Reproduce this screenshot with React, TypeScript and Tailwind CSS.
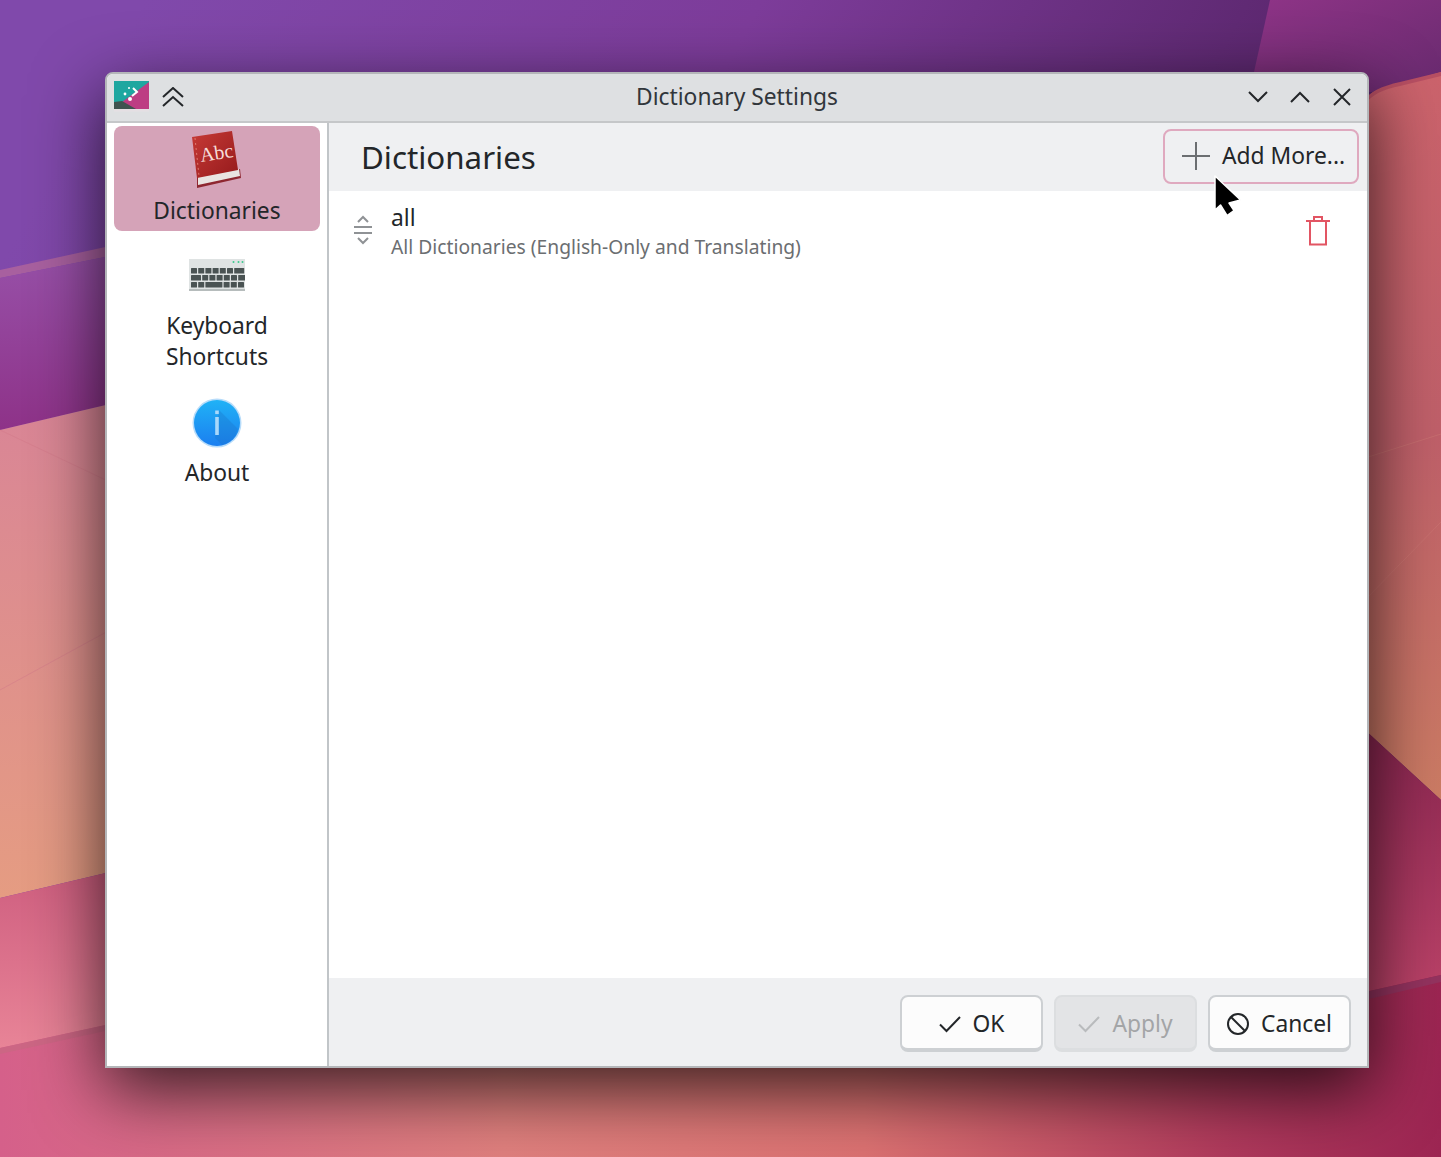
import React from "react";

function Wallpaper() {
  return (
    <svg className="absolute inset-0" width="1441" height="1157" viewBox="0 0 1441 1157">
      <defs>
        <linearGradient id="gTop" x1="0.1" y1="0" x2="0.9" y2="0.35">
          <stop offset="0" stopColor="#8049ab" />
          <stop offset="0.45" stopColor="#7d3c9a" />
          <stop offset="1" stopColor="#50205f" />
        </linearGradient>
        <linearGradient id="gTR" x1="0" y1="0" x2="1" y2="1">
          <stop offset="0" stopColor="#8f3487" />
          <stop offset="1" stopColor="#672a6e" />
        </linearGradient>
        <linearGradient id="gPurple" x1="0" y1="0" x2="0" y2="1">
          <stop offset="0" stopColor="#9750a8" />
          <stop offset="1" stopColor="#8e3288" />
        </linearGradient>
        <linearGradient id="gPeach" x1="0" y1="0" x2="0" y2="1">
          <stop offset="0" stopColor="#d98596" />
          <stop offset="1" stopColor="#e59c82" />
        </linearGradient>
        <linearGradient id="gPink" x1="0" y1="0" x2="0" y2="1">
          <stop offset="0" stopColor="#cf5f80" />
          <stop offset="1" stopColor="#e88497" />
        </linearGradient>
        <linearGradient id="gBottom" x1="0" y1="0" x2="1" y2="0">
          <stop offset="0" stopColor="#d5608a" />
          <stop offset="0.35" stopColor="#e0807e" />
          <stop offset="0.6" stopColor="#dc7272" />
          <stop offset="0.85" stopColor="#b03a5c" />
          <stop offset="1" stopColor="#9c2552" />
        </linearGradient>
        <linearGradient id="gCoral" x1="0" y1="0" x2="0" y2="1">
          <stop offset="0" stopColor="#cc636c" />
          <stop offset="0.5" stopColor="#c0606a" />
          <stop offset="1" stopColor="#cc7c64" />
        </linearGradient>
        <linearGradient id="gMag" x1="0" y1="0" x2="0" y2="1">
          <stop offset="0" stopColor="#8a2650" />
          <stop offset="1" stopColor="#bb4268" />
        </linearGradient>
      </defs>
      <rect width="1441" height="1157" fill="url(#gTop)" />
      <polygon points="1270,0 1441,0 1441,72 1372,92 1250,90" fill="url(#gTR)" />
      <polygon points="0,1000 1441,900 1441,1157 0,1157" fill="url(#gBottom)" />
      <polygon points="0,270 110,246 110,256 0,278" fill="#a8609f" />
      <polygon points="0,278 110,256 110,404 0,430" fill="url(#gPurple)" />
      <polygon points="0,430 110,404 110,872 0,898" fill="url(#gPeach)" />
      <line x1="0" y1="430" x2="110" y2="482" stroke="#d47a8a" strokeWidth="1" strokeOpacity="0.5" />
      <line x1="0" y1="690" x2="110" y2="630" stroke="#d47a8a" strokeWidth="1" strokeOpacity="0.5" />
      <polygon points="0,898 110,872 110,1024 0,1048" fill="url(#gPink)" />
      <polygon points="0,1048 110,1024 110,1030 0,1054" fill="#cc6684" />
      <path d="M1365,100 Q1372,88 1400,84 L1441,72 L1441,800 L1365,730 Z" fill="url(#gCoral)" />
      <path d="M1365,100 Q1372,88 1400,82 L1441,72 L1441,76 L1400,86 Q1376,90 1365,104 Z" fill="#b84f63" />
      <line x1="1365" y1="458" x2="1441" y2="434" stroke="#cf7a76" strokeWidth="1" strokeOpacity="0.5" />
      <line x1="1365" y1="600" x2="1441" y2="522" stroke="#cf7a76" strokeWidth="1" strokeOpacity="0.5" />
      <polygon points="1365,730 1441,800 1441,975 1365,992" fill="url(#gMag)" />
      <polygon points="1365,992 1441,975 1441,982 1365,1000" fill="#94335f" />
    </svg>
  );
}

function AppIcon() {
  return (
    <svg width="36" height="31" viewBox="0 0 36 31">
      <rect width="35" height="28" fill="#bd3d83" />
      <polygon points="0,0 35,0 35,1 0,27" fill="#1ea7a0" />
      <polygon points="0,28 0,21 8,20 22,28" fill="#3f5350" />
      <path d="M19 7 L23 11 L18 15" stroke="#fff" strokeWidth="2" fill="none" />
      <circle cx="16" cy="18" r="2" fill="#fff" />
      <circle cx="11" cy="13" r="1.4" fill="#fff" />
      <circle cx="15" cy="7" r="1" fill="#fff" />
      <rect y="28" width="35" height="2.5" fill="#e5dfe3" />
    </svg>
  );
}

function Book() {
  return (
    <svg width="52" height="58" viewBox="0 0 52 58">
      <defs>
        <linearGradient id="bk" x1="0" y1="0" x2="1" y2="1">
          <stop offset="0" stopColor="#c73a36" />
          <stop offset="1" stopColor="#951a1c" />
        </linearGradient>
      </defs>
      <polygon points="6,57 50,47 49,38 6,46" fill="#8e2730" />
      <polygon points="7,54 49,45 48,38 7,46" fill="#e9e4e1" />
      <polygon points="1,6 41,0 47,39 6,47" fill="url(#bk)" />
      <line x1="4" y1="7" x2="8" y2="45" stroke="#e07a70" strokeWidth="1" strokeDasharray="2 3" />
      <text x="10" y="31" transform="rotate(-9 10 31)" fontFamily="'Liberation Serif', serif" fontSize="20" fill="#f6dcd8">Abc</text>
    </svg>
  );
}

function Keyboard() {
  const rows: number[][] = [
    [6, 6, 6, 6, 6, 6, 10],
    [10, 6, 6, 6, 6, 6, 8],
    [6, 6, 17, 6, 6, 6],
  ];
  return (
    <svg width="56" height="32" viewBox="0 0 56 32">
      <rect width="56" height="32" fill="#dfe3e3" />
      <rect y="30" width="56" height="2" fill="#b6bcbc" />
      <circle cx="44.5" cy="3" r="1" fill="#3cc98f" />
      <circle cx="49.5" cy="3" r="1" fill="#3cc98f" />
      <circle cx="53.5" cy="3" r="1" fill="#3cc98f" />
      {rows.map((r, i) => {
        let x = 2;
        return r.map((w, j) => {
          const el = <rect key={`${i}-${j}`} x={x} y={9 + i * 7} width={w} height={5.5} rx={0.5} fill="#4a5353" />;
          x += w + 1.2;
          return el;
        });
      })}
    </svg>
  );
}

function Info() {
  return (
    <svg width="50" height="50" viewBox="0 0 50 50">
      <defs>
        <linearGradient id="inf" x1="0" y1="0" x2="0" y2="1">
          <stop offset="0" stopColor="#20b2f6" />
          <stop offset="1" stopColor="#1b7ff0" />
        </linearGradient>
      </defs>
      <circle cx="25" cy="25" r="24.5" fill="#b7dcfa" />
      <circle cx="25" cy="25" r="23" fill="url(#inf)" />
      <path d="M27 12 L46 31 A23 23 0 0 1 30 47 L23 40 Z" fill="#1c6fc4" opacity="0.3" />
      <rect x="23.2" y="19" width="3.6" height="18" fill="#a9d8fb" />
      <rect x="23.2" y="12.5" width="3.6" height="3.6" fill="#a9d8fb" />
    </svg>
  );
}

function Trash() {
  return (
    <svg width="24" height="30" viewBox="0 0 24 30" fill="none" stroke="#e25563" strokeWidth="2">
      <path d="M0 5H24" />
      <path d="M8 5V1H16V5" />
      <path d="M4 5V28.5H20V5" />
    </svg>
  );
}

function Check({ color }: { color: string }) {
  return (
    <svg width="22" height="18" viewBox="0 0 22 18" fill="none" stroke={color} strokeWidth="2">
      <path d="M1 9.5L7.5 16L21 2" />
    </svg>
  );
}

function SideItem({ icon, label, className }: { icon: React.ReactNode; label: React.ReactNode; className: string }) {
  return (
    <div className={`flex flex-col items-center text-center text-[22.8px] leading-[31px] text-[#232629] ${className}`}>
      {icon}
      {label}
    </div>
  );
}

function DialogButton({ icon, label, disabled }: { icon: React.ReactNode; label: string; disabled?: boolean }) {
  return (
    <div
      className={`flex h-[57px] w-[143px] items-center justify-center gap-3 rounded-lg border-2 border-b-[4px] pt-[2px] text-[22.8px] ${
        disabled ? "border-[#dcdee0] bg-[#e3e4e6] text-[#a3a5a7]" : "border-[#cdd0d3] bg-[#fcfcfc] text-[#232629]"
      }`}
    >
      {icon}
      <span className="mt-[1px]">{label}</span>
    </div>
  );
}

export default function App() {
  return (
    <div className="relative h-[1157px] w-[1441px] overflow-hidden font-['Noto_Sans',sans-serif]">
      <Wallpaper />
      <div className="absolute left-[105px] top-[72px] flex h-[996px] w-[1264px] flex-col rounded-t-lg border-2 border-[#b4b6b9] bg-white shadow-[0_22px_70px_rgba(0,0,0,0.75)]">
        <div className="relative flex h-[49px] shrink-0 items-center justify-between rounded-t-md border-b-2 border-[#c5c7c9] bg-[#dee0e2] pb-[2px] pl-[7px] pr-[15px]">
          <div className="flex items-center gap-[12px]">
            <AppIcon />
            <svg width="22" height="20" viewBox="0 0 22 20" fill="none" stroke="#232629" strokeWidth="2">
              <path d="M1 10L11 1L21 10" />
              <path d="M1 19L11 10L21 19" />
            </svg>
          </div>
          <div className="absolute inset-x-0 mt-[1px] text-center text-[22.8px] text-[#31363b]">Dictionary Settings</div>
          <div className="flex items-center gap-[22px]">
            <svg width="20" height="12" viewBox="0 0 20 12" fill="none" stroke="#232629" strokeWidth="2">
              <path d="M1 1L10 10L19 1" />
            </svg>
            <svg width="20" height="12" viewBox="0 0 20 12" fill="none" stroke="#232629" strokeWidth="2">
              <path d="M1 11L10 2L19 11" />
            </svg>
            <svg width="20" height="18" viewBox="0 0 20 18" fill="none" stroke="#232629" strokeWidth="2">
              <path d="M2 1L18 17M18 1L2 17" />
            </svg>
          </div>
        </div>
        <div className="flex min-h-0 flex-1">
          <div className="flex w-[222px] shrink-0 flex-col border-r-2 border-[#c1c5c8] px-[7px] pt-[3px]">
            <SideItem
              className="h-[105px] w-[206px] rounded-lg bg-[#d5a3b8] pt-[5px] text-[#111]"
              icon={<Book />}
              label={<div className="mt-[6px]">Dictionaries</div>}
            />
            <SideItem
              className="h-[147px] pt-[28px]"
              icon={<Keyboard />}
              label={
                <div className="mt-[19px]">
                  Keyboard
                  <br />
                  Shortcuts
                </div>
              }
            />
            <SideItem
              className="pt-[20px]"
              icon={<Info />}
              label={<div className="mt-[9px]">About</div>}
            />
          </div>
          <div className="flex min-w-0 flex-1 flex-col">
            <div className="flex h-[68px] shrink-0 items-center justify-between bg-[#eff0f2] pl-[32px] pr-[8px]">
              <div className="text-[31.3px] text-[#232629]">Dictionaries</div>
              <div className="mb-[2px] flex h-[55px] w-[196px] items-center gap-[12px] rounded-lg border-2 border-[#dfa9bf] pl-[17px] text-[22.8px] text-[#232629]">
                <svg width="28" height="28" viewBox="0 0 28 28" stroke="#6b6e71" strokeWidth="2">
                  <path d="M14 0V28M0 14H28" />
                </svg>
                <span>Add More...</span>
              </div>
            </div>
            <div className="flex flex-1 items-start justify-between bg-white pl-[24px] pr-[37px] pt-[11px]">
              <div className="flex items-center gap-[18px]">
                <svg className="mb-[2px]" width="20" height="30" viewBox="0 0 20 30" fill="none" stroke="#8f9295" strokeWidth="2">
                  <path d="M5 7L10 2L15 7" />
                  <path d="M1 12H19M1 18H19" />
                  <path d="M5 23L10 28L15 23" />
                </svg>
                <div>
                  <div className="text-[22.8px] leading-[31px] text-[#232629]">all</div>
                  <div className="text-[19.25px] leading-[27px] text-[#6b6e71]">All Dictionaries (English-Only and Translating)</div>
                </div>
              </div>
              <div className="mt-[14px]">
                <Trash />
              </div>
            </div>
            <div className="flex h-[88px] shrink-0 items-start justify-end gap-[11px] bg-[#eff0f2] pr-[16px] pt-[17px]">
              <DialogButton icon={<Check color="#232629" />} label="OK" />
              <DialogButton icon={<Check color="#b9bbbd" />} label="Apply" disabled />
              <DialogButton
                icon={
                  <svg width="22" height="22" viewBox="0 0 22 22" fill="none" stroke="#232629" strokeWidth="2">
                    <circle cx="11" cy="11" r="10" />
                    <path d="M4 4L18 18" />
                  </svg>
                }
                label="Cancel"
              />
            </div>
          </div>
        </div>
      </div>
      <svg className="absolute left-[1211px] top-[173px]" width="32" height="48" viewBox="0 0 32 48">
        <path d="M4 3L4 37L9.5 32L16 42.5L23 37.5L18 30L29.5 27Z" fill="#000" stroke="#fff" strokeWidth="1.5" strokeLinejoin="round" />
      </svg>
    </div>
  );
}
